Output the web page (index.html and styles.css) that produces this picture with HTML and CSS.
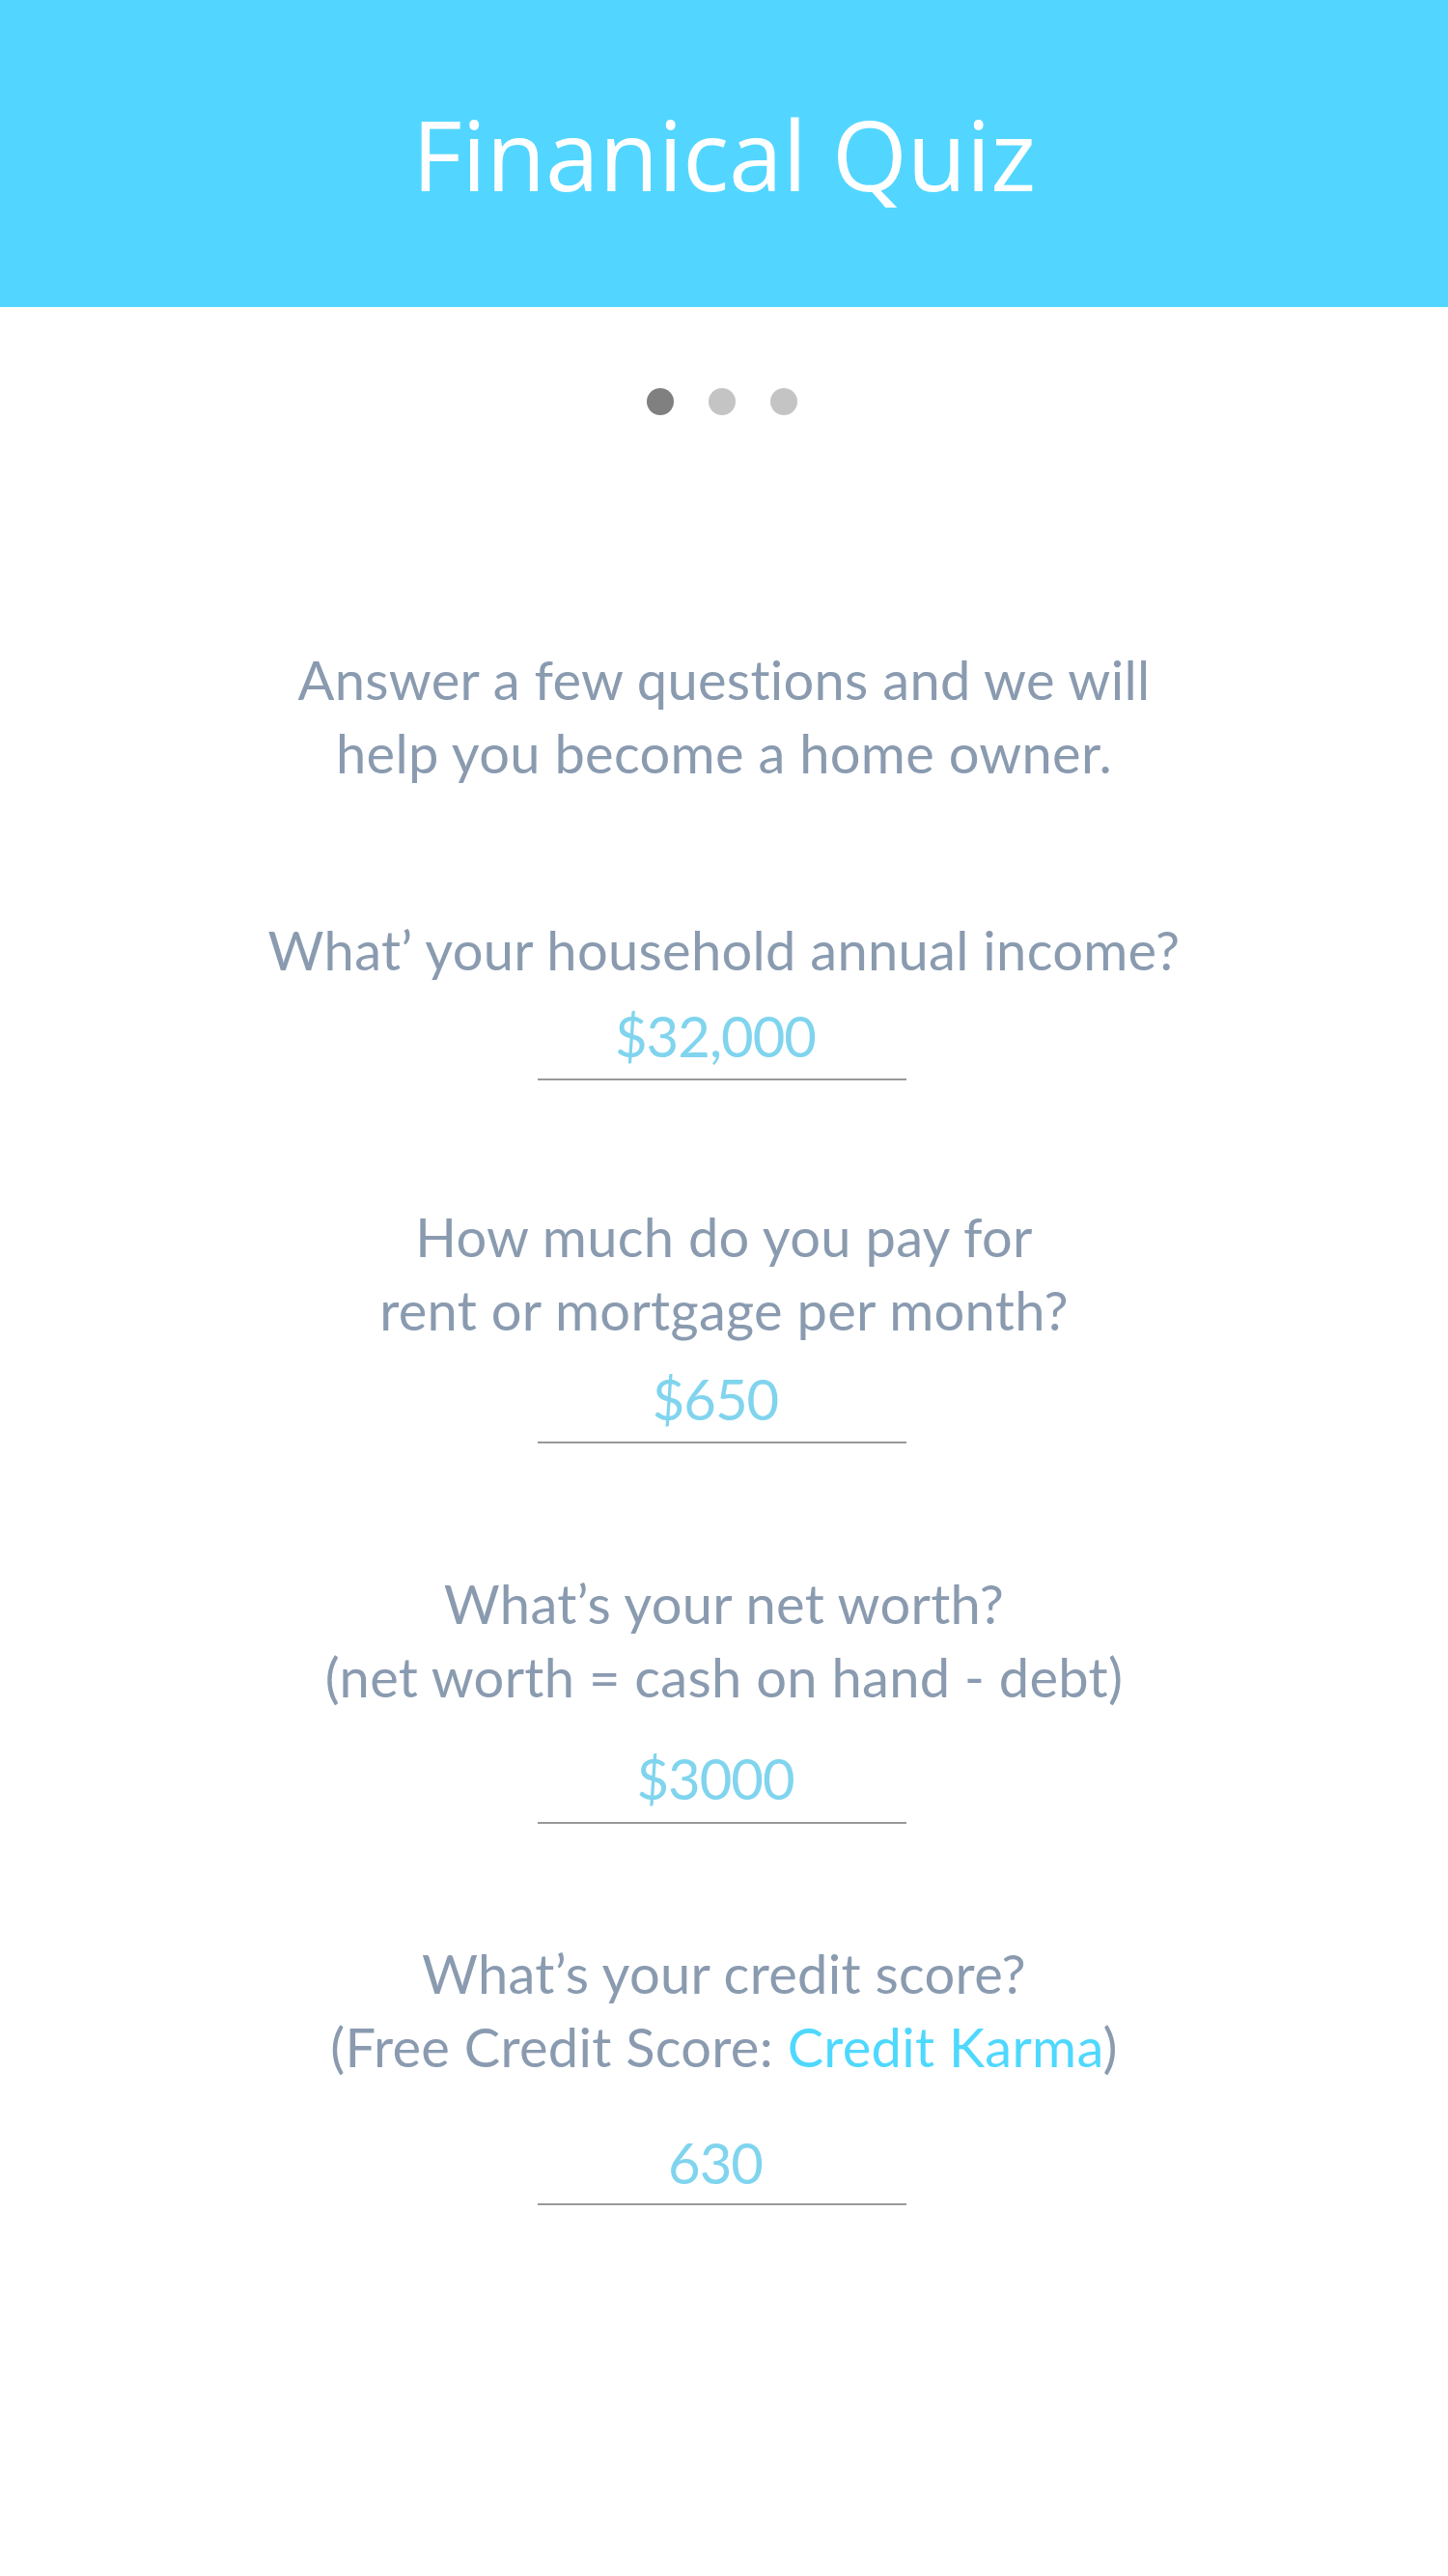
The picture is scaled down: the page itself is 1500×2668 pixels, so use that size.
FILE: index.html
```html
<!DOCTYPE html>
<html lang="en">
<head>
<meta charset="utf-8">
<title>Finanical Quiz</title>
<link rel="stylesheet" href="styles.css">
</head>
<body>
<header class="hero">
  <h1 class="hero-title">Finanical Quiz</h1>
</header>
<nav class="pager">
  <span class="dot dot-active"></span>
  <span class="dot"></span>
  <span class="dot"></span>
</nav>
<main class="quiz">
  <p class="intro">Answer a few questions and we will<br>help you become a home owner.</p>
  <section class="question q1">
    <p class="label">What’ your household annual income?</p>
    <div class="field"><span class="value">$32,000</span></div>
  </section>
  <section class="question q2">
    <p class="label">How much do you pay for<br>rent or mortgage per month?</p>
    <div class="field"><span class="value">$650</span></div>
  </section>
  <section class="question q3">
    <p class="label">What’s your net worth?<br>(net worth = cash on hand - debt)</p>
    <div class="field"><span class="value">$3000</span></div>
  </section>
  <section class="question q4">
    <p class="label">What’s your credit score?<br>(Free Credit Score: <a class="link" href="#">Credit Karma</a>)</p>
    <div class="field"><span class="value">630</span></div>
  </section>
</main>
</body>
</html>
```
FILE: styles.css
```css
html, body {
  margin: 0;
  padding: 0;
  background: #ffffff;
}
body {
  font-family: "Lato", "Noto Sans", sans-serif;
  color: #8a9bb0;
}
.hero {
  height: 318px;
  background: #52d6ff;
  display: flex;
  align-items: center;
  justify-content: center;
}
.hero-title {
  margin: 0;
  font-family: "Open Sans", sans-serif;
  font-weight: 400;
  font-size: 100px;
  line-height: 136px;
  color: #ffffff;
}
.pager {
  display: flex;
  justify-content: center;
  gap: 36px;
  margin-top: 84px;
  padding-right: 4px;
}
.dot {
  width: 28px;
  height: 28px;
  border-radius: 50%;
  background: #c4c4c4;
}
.dot-active {
  background: #808080;
}
.quiz {
  display: flex;
  flex-direction: column;
  align-items: center;
  text-align: center;
}
.intro, .label {
  margin: 0;
  font-size: 56px;
  line-height: 76px;
  letter-spacing: 0.3px;
}
.intro {
  margin-top: 236px;
}
.question {
  display: flex;
  flex-direction: column;
  align-items: center;
}
.field {
  width: 382px;
  margin-right: 4px;
  border-bottom: 2px solid #999999;
  text-align: center;
}
.value {
  display: block;
  font-size: 58px;
  line-height: 60px;
  color: #80d4ee;
  letter-spacing: -1px;
  padding-right: 14px;
}
.link {
  color: #4fd8fe;
  text-decoration: none;
}
.q1 { margin-top: 128px; }
.q1 .field { margin-top: 21px; padding-bottom: 14px; }
.q2 { margin-top: 124px; }
.q2 .field { margin-top: 24px; padding-bottom: 14px; }
.q3 { margin-top: 128px; }
.q3 .field { margin-top: 37px; padding-bottom: 15px; }
.q4 { margin-top: 117px; }
.q4 .field { margin-top: 52px; padding-bottom: 12px; }
```
